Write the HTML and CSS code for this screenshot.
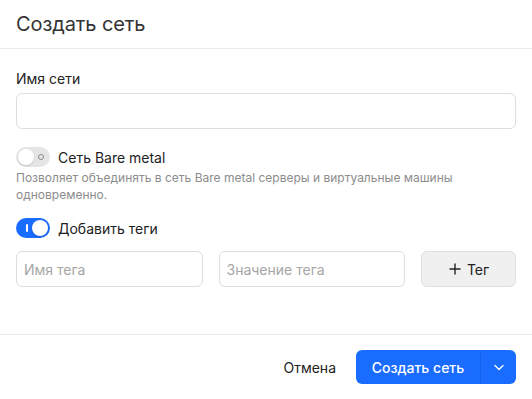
FILE: index.html
```html
<!DOCTYPE html>
<html lang="ru">
<head>
<meta charset="utf-8">
<link rel="stylesheet" href="styles.css">
</head>
<body>
<div class="dialog">
  <div class="header">Создать сеть</div>
  <div class="content">
    <label class="label">Имя сети</label>
    <div class="input"></div>

    <div class="toggle-row first">
      <span class="toggle off"><span class="ring"></span><span class="knob"></span></span>
      <span class="toggle-text">Сеть Bare metal</span>
    </div>
    <div class="hint">Позволяет объединять в сеть Bare metal серверы и виртуальные машины<br>одновременно.</div>

    <div class="toggle-row second">
      <span class="toggle on"><span class="bar"></span><span class="knob"></span></span>
      <span class="toggle-text">Добавить теги</span>
    </div>

    <div class="tags">
      <div class="input small"><span class="ph">Имя тега</span></div>
      <div class="input small"><span class="ph">Значение тега</span></div>
      <div class="btn-tag">
        <svg width="14" height="14" viewBox="0 0 14 14"><path d="M7 1.5v11M1.5 7h11" stroke="#222" stroke-width="1.4" fill="none"/></svg>
        <span>Тег</span>
      </div>
    </div>
  </div>
  <div class="footer">
    <span class="btn-cancel">Отмена</span>
    <div class="btn-primary">
      <span class="main">Создать сеть</span>
      <span class="arrow"><svg width="14" height="14" viewBox="0 0 14 14"><path d="M3 5.5l4 4 4-4" stroke="#fff" stroke-width="1.3" fill="none" stroke-linecap="round" stroke-linejoin="round"/></svg></span>
    </div>
  </div>
</div>
</body>
</html>
```

FILE: styles.css
```css
* { box-sizing: border-box; }
html, body { margin: 0; padding: 0; background: #fff; }
body { font-family: Inter, "Noto Sans", sans-serif; color: #222; }

.dialog {
  width: 532px;
  height: 399px;
  display: flex;
  flex-direction: column;
}

.header {
  height: 49px;
  border-bottom: 1px solid #ebebeb;
  padding: 0 16px;
  display: flex;
  align-items: center;
  font-size: 20px;
  color: #333;
  letter-spacing: -0.1px;
}

.content {
  flex: 1;
  padding: 20px 16px 0;
  display: flex;
  flex-direction: column;
}

.label {
  font-size: 14px;
  line-height: 20px;
  color: #222;
  margin-bottom: 4px;
}

.input {
  height: 36px;
  border: 1px solid #dedede;
  border-radius: 6px;
  background: #fff;
  display: flex;
  align-items: center;
  padding: 0 7px;
}

.ph { font-size: 14px; color: #a6a6a6; }

.toggle-row {
  display: flex;
  align-items: center;
  gap: 8px;
  height: 20px;
}
.toggle-row.first { margin-top: 18px; }
.toggle-row.second { margin-top: 15px; }

.toggle-text { font-size: 14px; color: #222; }

.toggle {
  position: relative;
  width: 34px;
  height: 20px;
  border-radius: 10px;
  flex: none;
}
.toggle.off { background: #e5e5e5; }
.toggle.on { background: #1a6cff; }

.knob {
  position: absolute;
  top: 2px;
  width: 16px;
  height: 16px;
  border-radius: 50%;
  background: #fff;
  box-shadow: 0 1px 2px rgba(0,0,0,0.15);
}
.toggle.off .knob { left: 2px; }
.toggle.on .knob { right: 2px; }

.ring {
  position: absolute;
  right: 6px;
  top: 7px;
  width: 6px;
  height: 6px;
  border: 1.3px solid #8a8a8a;
  border-radius: 50%;
}
.bar {
  position: absolute;
  left: 10px;
  top: 6px;
  width: 1.6px;
  height: 8px;
  background: #fff;
  border-radius: 1px;
}

.hint {
  margin-top: 2px;
  font-size: 12px;
  line-height: 17px;
  color: #8c8c8c;
}

.tags {
  margin-top: 13px;
  display: grid;
  grid-template-columns: 1fr 1fr 95px;
  gap: 16px;
}

.btn-tag {
  height: 36px;
  border: 1px solid #e0e0e0;
  border-radius: 6px;
  background: #f0f0f0;
  display: flex;
  align-items: center;
  justify-content: center;
  gap: 5px;
  font-size: 14px;
  color: #222;
}
.btn-tag svg { display: block; }

.footer {
  height: 65px;
  border-top: 1px solid #ebebeb;
  padding: 0 16px;
  display: flex;
  align-items: center;
  justify-content: flex-end;
  gap: 20px;
}

.btn-cancel {
  font-size: 14px;
  color: #222;
}

.btn-primary {
  height: 34px;
  width: 160px;
  border-radius: 6px;
  background: #1a6cff;
  color: #fff;
  display: flex;
  align-items: stretch;
  font-size: 14px;
  font-weight: 500;
}
.btn-primary .main {
  flex: 1;
  display: flex;
  align-items: center;
  justify-content: center;
  border-right: 1px solid rgba(0,0,0,0.08);
}
.btn-primary .arrow {
  width: 35px;
  display: flex;
  align-items: center;
  justify-content: center;
}
.btn-primary svg { display: block; }
```
